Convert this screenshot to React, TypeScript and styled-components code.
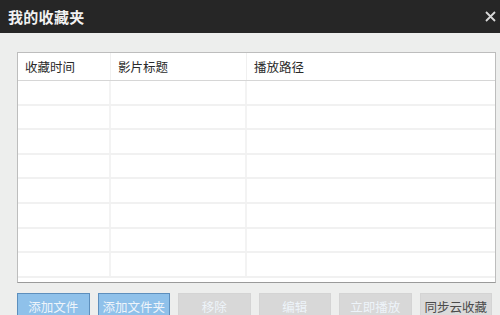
import styled, { createGlobalStyle } from 'styled-components';

const GlobalStyle = createGlobalStyle`
  html, body {
    margin: 0;
    padding: 0;
    background: #ececec;
  }
  * {
    box-sizing: border-box;
  }
`;

const Janela = styled.div`
  width: 500px;
  height: 315px;
  overflow: hidden;
  display: flex;
  flex-direction: column;
  background: #edeeed;
  font-family: "Noto Sans CJK SC", "Noto Sans", sans-serif;
`;

const BarraTitulo = styled.div`
  height: 33px;
  flex-shrink: 0;
  display: flex;
  align-items: center;
  justify-content: space-between;
  padding: 0 3px 0 8px;
  background: #262626;
  color: #f2f2f2;
`;

const Titulo = styled.h1`
  margin: 0;
  font-size: 15px;
  font-weight: bold;
  letter-spacing: 0.3px;
`;

const Fechar = styled.span`
  width: 14px;
  height: 14px;
  display: flex;
  align-items: center;
  justify-content: center;
`;

const Corpo = styled.div`
  flex: 1;
  display: flex;
  flex-direction: column;
  padding: 19px 4px 0 17px;
  gap: 10px;
`;

const Tabela = styled.div`
  height: 231px;
  background: #fff;
  border: 1px solid #bdbdbd;
  border-bottom-color: #9a9a9a;
  display: flex;
  flex-direction: column;
`;

const Linha = styled.div<{ $cabecalho?: boolean }>`
  display: grid;
  grid-template-columns: 93px 136px 1fr;
  height: ${(p) => (p.$cabecalho ? '28px' : '24.6px')};
  flex-shrink: 0;
  border-bottom: ${(p) => (p.$cabecalho ? '1px solid #d6d6d6' : '2px solid #f1f1f1')};
`;

const Celula = styled.div<{ $cabecalho?: boolean }>`
  display: flex;
  align-items: center;
  padding-left: ${(p) => (p.$cabecalho ? '7px' : '4px')};
  font-size: 12.5px;
  color: #2a2a2a;
  border-right: ${(p) => (p.$cabecalho ? '1px solid #f0f0f0' : '2px solid #f3f3f3')};
  &:last-child {
    border-right: none;
  }
`;

const Botoes = styled.div`
  display: flex;
  gap: 8px;
`;

const Botao = styled.button<{ $tipo: 'azul' | 'cinza' | 'normal' }>`
  width: 72.5px;
  height: 28px;
  flex-shrink: 0;
  padding: 0;
  font-family: inherit;
  font-size: 12.5px;
  border-radius: 0;
  border: 1px solid
    ${(p) => (p.$tipo === 'azul' ? '#5d8fbd' : '#d4d4d4')};
  background: ${(p) =>
    p.$tipo === 'azul' ? '#8fc1ea' : p.$tipo === 'cinza' ? '#d8d8d8' : '#dadada'};
  color: ${(p) => (p.$tipo === 'normal' ? '#4a4a4a' : '#eef4fa')};
  display: flex;
  justify-content: center;
  padding-top: 3px;
  cursor: pointer;
`;

const linhas = Array.from({ length: 8 });

const App = () => {
  return (
    <>
      <GlobalStyle />
      <Janela>
        <BarraTitulo>
          <Titulo>我的收藏夹</Titulo>
          <Fechar>
            <svg width="11" height="11" viewBox="0 0 11 11">
              <path d="M1 1 L10 10 M10 1 L1 10" stroke="#d8d8d8" strokeWidth="1.8" />
            </svg>
          </Fechar>
        </BarraTitulo>
        <Corpo>
          <Tabela>
            <Linha $cabecalho>
              <Celula $cabecalho>收藏时间</Celula>
              <Celula $cabecalho>影片标题</Celula>
              <Celula $cabecalho>播放路径</Celula>
            </Linha>
            {linhas.map((_, i) => (
              <Linha key={i}>
                <Celula />
                <Celula />
                <Celula />
              </Linha>
            ))}
          </Tabela>
          <Botoes>
            <Botao $tipo="azul">添加文件</Botao>
            <Botao $tipo="azul">添加文件夹</Botao>
            <Botao $tipo="cinza">移除</Botao>
            <Botao $tipo="cinza">编辑</Botao>
            <Botao $tipo="cinza">立即播放</Botao>
            <Botao $tipo="normal">同步云收藏</Botao>
          </Botoes>
        </Corpo>
      </Janela>
    </>
  );
};

export default App;
